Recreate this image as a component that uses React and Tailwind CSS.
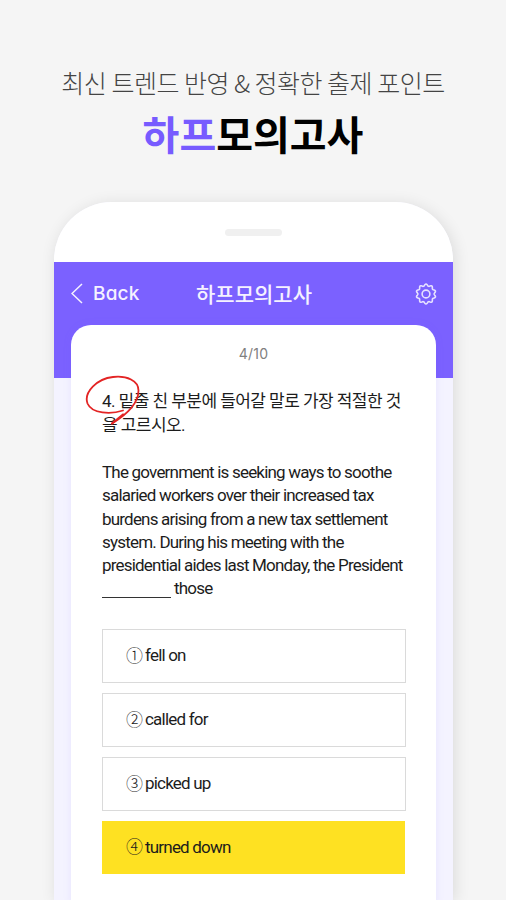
import React from 'react';

const passage = [
  'The government is seeking ways to soothe',
  'salaried workers over their increased tax',
  'burdens arising from a new tax settlement',
  'system. During his meeting with the',
  'presidential aides last Monday, the President',
];

const answers = [
  { mark: '①', text: 'fell on' },
  { mark: '②', text: 'called for' },
  { mark: '③', text: 'picked up' },
  { mark: '④', text: 'turned down', selected: true },
];

// wavy outline of the gear
function gearPath() {
  const points = [];
  for (let i = 0; i < 120; i++) {
    const a = (i / 120) * Math.PI * 2;
    const r = 9 + 0.9 * Math.cos(a * 10);
    points.push((11 + r * Math.sin(a)).toFixed(2) + ' ' + (11 - r * Math.cos(a)).toFixed(2));
  }
  return 'M' + points.join('L') + 'Z';
}

function GearIcon() {
  return (
    <svg width="22" height="22" viewBox="0 0 22 22" fill="none" stroke="#e6e1ff" strokeWidth="1.6">
      <path d={gearPath()} />
      <circle cx="11" cy="11" r="3.9" />
    </svg>
  );
}

function RedCircle() {
  return (
    <svg className="absolute left-[13px] top-[47px]" width="60" height="60" viewBox="0 0 60 60" fill="none" stroke="#e32424" strokeLinecap="round">
      <path d="M39 38.500C27 42.500 8 42 3.500 31.500C-0.500 20.500 13 6.500 29 5C43 3.500 54.500 8.500 54.500 18.500C54.500 29 46 40.500 28 51.500" strokeWidth="1.8" />
      <path d="M39 42.500L28 51.500" strokeWidth="2.2" />
    </svg>
  );
}

function Answer({ mark, text, selected }) {
  return (
    <li className={selected ? 'flex h-[53px] w-[303px] items-center bg-[#fee122] pl-6' : 'flex h-[54px] w-[304px] items-center border border-[#dadada] pl-[23px]'}>
      <span className="-mt-[3px] w-[19px] font-['Noto_Sans_CJK_KR',sans-serif] text-[17px] font-light leading-none">{mark}</span>
      <span className="text-[17px] tracking-[-0.8px]">{text}</span>
    </li>
  );
}

function App() {
  return (
    <div className="h-[900px] w-[506px] overflow-hidden bg-[#f5f5f5] font-['Noto_Sans_CJK_KR',sans-serif] text-[#1c1c1c]">
      <header className="flex h-[202px] flex-col items-center pt-[64px] text-center whitespace-nowrap">
        <p className="text-[25px] font-light leading-[36px] tracking-[-0.5px] text-[#444]">최신 트렌드 반영 &amp; 정확한 출제 포인트</p>
        <h1 className="mt-[5px] text-[40px] font-bold leading-[56px] text-black">
          <span className="text-[#775bff]">하프</span>모의고사
        </h1>
      </header>

      <main className="ml-[54px] h-[698px] w-[399px] rounded-t-[58px] bg-[#f4f3ff] shadow-[2px_2px_16px_rgba(0,0,0,0.11)]">
        <div className="flex h-[60px] justify-center rounded-t-[58px] bg-white pt-[27px]">
          <div className="h-[7px] w-[57px] rounded-full bg-[#f0f0f0]"></div>
        </div>

        <div className="h-[116px] bg-[#7b61ff]">
          <nav className="grid h-[63px] grid-cols-3 items-center pl-[17px] pr-4 text-[#f5f2ff]">
            <div className="flex items-center gap-[10px]">
              <svg width="12" height="21" viewBox="0 0 12 21" fill="none" stroke="currentColor" strokeWidth="1.5">
                <path d="M11 1L1 10.500L11 20" />
              </svg>
              <span className="pt-0.5 font-['Inter',sans-serif] text-[19px] font-medium tracking-[0.2px] [font-feature-settings:'cv11']">Back</span>
            </div>
            <h2 className="pb-0.5 text-center text-[21px] font-medium leading-[30px] whitespace-nowrap">하프모의고사</h2>
            <div className="flex justify-end">
              <GearIcon />
            </div>
          </nav>

          <section className="relative mx-auto h-[580px] w-[365px] rounded-t-[20px] bg-white px-[31px] pt-[19px] font-['Roboto','Noto_Sans_CJK_KR',sans-serif] shadow-[0_0_8px_rgba(119,95,255,0.10)]">
            <p className="text-center font-['Inter',sans-serif] text-[14px] leading-[20px] tracking-[0.2px] text-[#808080]">4/10</p>
            <div className="mt-[25px] text-[17px] leading-[24px] whitespace-nowrap">
              <p className="tracking-[-0.55px]">4. 밑줄 친 부분에 들어갈 말로 가장 적절한 것</p>
              <p className="tracking-[-0.55px]">을 고르시오.</p>
            </div>
            <div className="mt-[24px] text-[17px] leading-[23.3px] tracking-[-0.8px] whitespace-nowrap">
              {passage.map((line) => (
                <p key={line}>{line}</p>
              ))}
              <p className="flex gap-[3px]">
                <span className="mb-[3px] w-[69px] border-b border-[#333]"></span>
                those
              </p>
            </div>
            <ul className="mt-[28px] flex flex-col gap-[10px]">
              {answers.map((answer) => (
                <Answer key={answer.text} {...answer} />
              ))}
            </ul>
            <RedCircle />
          </section>
        </div>
      </main>
    </div>
  );
}

export default App;
